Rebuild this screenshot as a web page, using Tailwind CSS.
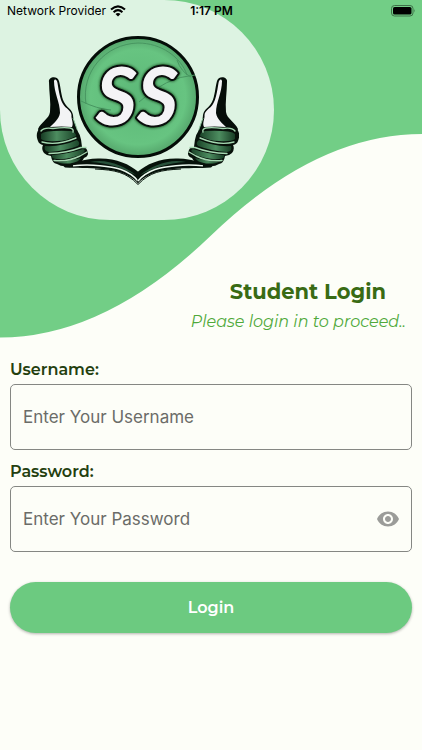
<!DOCTYPE html>
<html lang="en">
<head>
<meta charset="utf-8">
<meta name="viewport" content="width=device-width, initial-scale=1">
<title>Student Login</title>
<script src="https://cdn.jsdelivr.net/npm/@tailwindcss/browser@4"></script>
</head>
<body class="min-h-screen bg-[#fdfef8] font-[Montserrat,Inter,sans-serif]">
<div class="relative flex min-h-screen flex-col">
  <!-- Wave backdrop -->
  <svg class="absolute inset-x-0 top-0 h-[338px] w-full" viewBox="0 0 422 338" preserveAspectRatio="none" aria-hidden="true">
    <path fill="#72ce86" d="M0 0H422V134Q316 134 211 235.500Q105 337.500 0 337.500Z"/>
  </svg>

  <!-- Status bar -->
  <div class="absolute inset-x-0 top-0 z-10 grid h-[22px] grid-cols-3 items-center pr-[6px] pl-[7px] font-[Inter,sans-serif] text-xs text-black">
    <div class="flex items-center gap-1 whitespace-nowrap">
      <span>Network Provider</span>
      <svg class="h-[12px] w-[16px]" viewBox="0 0 16 12" aria-hidden="true">
        <g fill="none" stroke="#000" stroke-width="2.100">
          <path d="M1 4.600Q8 -2 15 4.600"/><path d="M3.600 7.200Q8 3.200 12.400 7.200"/>
        </g>
        <path d="M5.500 9Q8 6.900 10.500 9L8 11.600Z"/>
      </svg>
    </div>
    <div class="text-center font-semibold">1:17 PM</div>
    <svg class="h-[12px] w-[25px] justify-self-end" viewBox="0 0 25 12" aria-hidden="true">
      <rect x=".5" y=".5" width="21.500" height="10.500" rx="3" fill="none" stroke="#3e7049"/>
      <rect x="2" y="2" width="18.500" height="7.500" rx="1.600"/>
      <path d="M23.300 4q1.400 1.700 0 3.400z" fill="#3e7049"/>
    </svg>
  </div>

  <header class="relative">
    <div class="flex h-[220px] w-[65%] items-center justify-center rounded-tr-[110px] rounded-b-[110px] bg-[#ddf3e2]">
      <svg class="h-[154px] w-[204px]" viewBox="35 33 204 154" role="img" aria-label="SS logo">
        <defs>
          <radialGradient id="disc"><stop offset="0" stop-color="#5cb877"/><stop offset=".8" stop-color="#67c481"/><stop offset="1" stop-color="#55a66c"/></radialGradient>
          <linearGradient id="finger"><stop offset="0" stop-color="#183d25"/><stop offset=".45" stop-color="#4d8d60"/><stop offset="1" stop-color="#1b4429"/></linearGradient>
          <filter id="soft" x="-20%" y="-20%" width="140%" height="140%"><feDropShadow dx="0" dy="0" stdDeviation="1.500" flood-color="#06200e"/></filter>
          <g id="side">
            <!-- Book page -->
            <path fill="#06120a" d="M60 163C76 164 80 159 98 158.500C116 158 129 164 138.500 172V183.500C129 174 118 170.500 102 169C88 167.500 76 168.500 65 167.500Z"/>
            <path fill="#28513a" d="M90 162C107 158 124 166 136 175C122 168 109 163 90 162Z"/>
            <path fill="none" stroke="#edfaf0" stroke-width="1.500" d="M73 165.800C91 164 111 166 121 169.500Q132 173.500 138 181"/>
            <path fill="none" stroke="#07130b" stroke-width="1" d="M95 169C115 170 126 172 138 184.500"/>
            <!-- Thumb -->
            <path fill="#050d08" d="M49 82C48 77 57 75 59 81C61 88 61 96 64 102C67 108 72 109 73 115C73 121 78 128 78 136L41 137L38 129C41 122 49 119 50 112C51 102 49 92 49 82Z"/>
            <path fill="#f3f4f5" d="M54 81C55 78 57 80 57.500 83C59 92 60 99 63 104C66 109 71 110 71.500 115C71 119 74 123 72 127Q62 126 50 127C54 123 59 119 60 113C60 102 54 93 54 81Z"/>
            <path fill="none" stroke="#8cc49a" stroke-width="1" d="M73 118Q78 128 78 140"/>
            <!-- Fist -->
            <path fill="#07110a" d="M42 127C36 130 36 136 38 141Q39 144 43 145Q41 149 44 153Q47 156 51 156Q52 163 57 164Q63 168 74 165Q82 163 84 158Q90 156 87 150Q86 147 82 147Q81 132 74 127Z"/>
            <path fill="url(#finger)" d="M41 134Q45 130 71 131Q76 132 76 136Q67 141 57 141Q45 142 41 139Z"/>
            <path fill="url(#finger)" d="M45 146Q61 147 77 140Q81 143 78 146Q65 151 49 152Q43 151 45 146Z"/>
            <path fill="url(#finger)" d="M52 155Q69 154 83 149Q87 150 82 154Q69 160 57 159Q51 159 52 155Z"/>
            <path fill="url(#finger)" d="M57 162Q70 161 81 158Q79 162 70 163.500Q61 164 57 162Z"/>
            <g fill="none" stroke="#a5d8b1" stroke-width="1.400" stroke-linecap="round">
              <path d="M41 131Q44 127 53 128.500Q64 127 70 128Q74 129 73 132"/>
              <path d="M42 142Q57 146 76 138"/>
              <path d="M49 153.500Q67 153 81 147.500H86"/>
              <path d="M54 160.500Q68 162 80 156L87 152"/>
            </g>
          </g>
        </defs>
        <use href="#side"/>
        <use href="#side" transform="matrix(-1 0 0 1 276 0)"/>
        <circle cx="138" cy="97" r="59.500" fill="url(#disc)" stroke="#040c07" stroke-width="3"/>
        <path fill="none" stroke="#489661" stroke-width="1" d="M86 104C81 72 105 44 138 43C161 43 181 57 187 75M81 101Q97 109 111 110M139 102Q166 77 195 75M177 60Q181 72 191 77"/>
        <text x="137" y="125" text-anchor="middle" font-family="Lato, sans-serif" font-size="80" font-weight="700" font-style="italic" fill="#f4f3f6" stroke="#07110a" stroke-width="4" stroke-linejoin="round" paint-order="stroke" filter="url(#soft)">SS</text>
      </svg>
    </div>
    <div class="flex flex-col items-end pt-[56px] pr-4">
      <h1 class="mr-5 text-[21px] leading-8 font-bold text-[#396b14]">Student Login</h1>
      <p class="text-base leading-7 text-[#4fa93a] italic">Please login in to proceed..</p>
    </div>
  </header>

  <form class="relative flex flex-col px-[10px] pt-[22px]">
    <label for="username" class="text-base leading-6 font-semibold text-[#24400f]">Username:</label>
    <input id="username" type="text" placeholder="Enter Your Username" class="mt-[2px] h-[66px] w-full rounded-[5px] border border-[#858783] bg-transparent px-3 font-[Inter,sans-serif] text-[17px] text-[#222] placeholder:text-[#6b6c68]">
    <label for="password" class="mt-[10px] text-base leading-6 font-semibold text-[#24400f]">Password:</label>
    <div class="relative mt-[2px]">
      <input id="password" type="password" placeholder="Enter Your Password" class="block h-[66px] w-full rounded-[5px] border border-[#858783] bg-transparent pr-12 pl-3 font-[Inter,sans-serif] text-[17px] text-[#222] placeholder:text-[#6b6c68]">
      <button type="button" aria-label="Show password" class="absolute inset-y-0 right-3 flex items-center">
        <svg class="size-6" viewBox="0 0 24 24" fill="#9b9c99" aria-hidden="true"><path d="M12 4.500C7 4.500 2.730 7.610 1 12c1.730 4.390 6 7.500 11 7.500s9.270-3.110 11-7.500c-1.730-4.390-6-7.500-11-7.500zM12 17c-2.760 0-5-2.240-5-5s2.240-5 5-5 5 2.240 5 5-2.240 5-5 5zm0-8c-1.660 0-3 1.340-3 3s1.340 3 3 3 3-1.340 3-3-1.340-3-3-3z"/></svg>
      </button>
    </div>
    <button type="submit" class="mt-[30px] h-[51px] w-full rounded-full bg-[#6cca80] text-base font-semibold text-white shadow-[0_1px_3px_rgba(0,0,0,0.3)]">Login</button>
  </form>
</div>
</body>
</html>
